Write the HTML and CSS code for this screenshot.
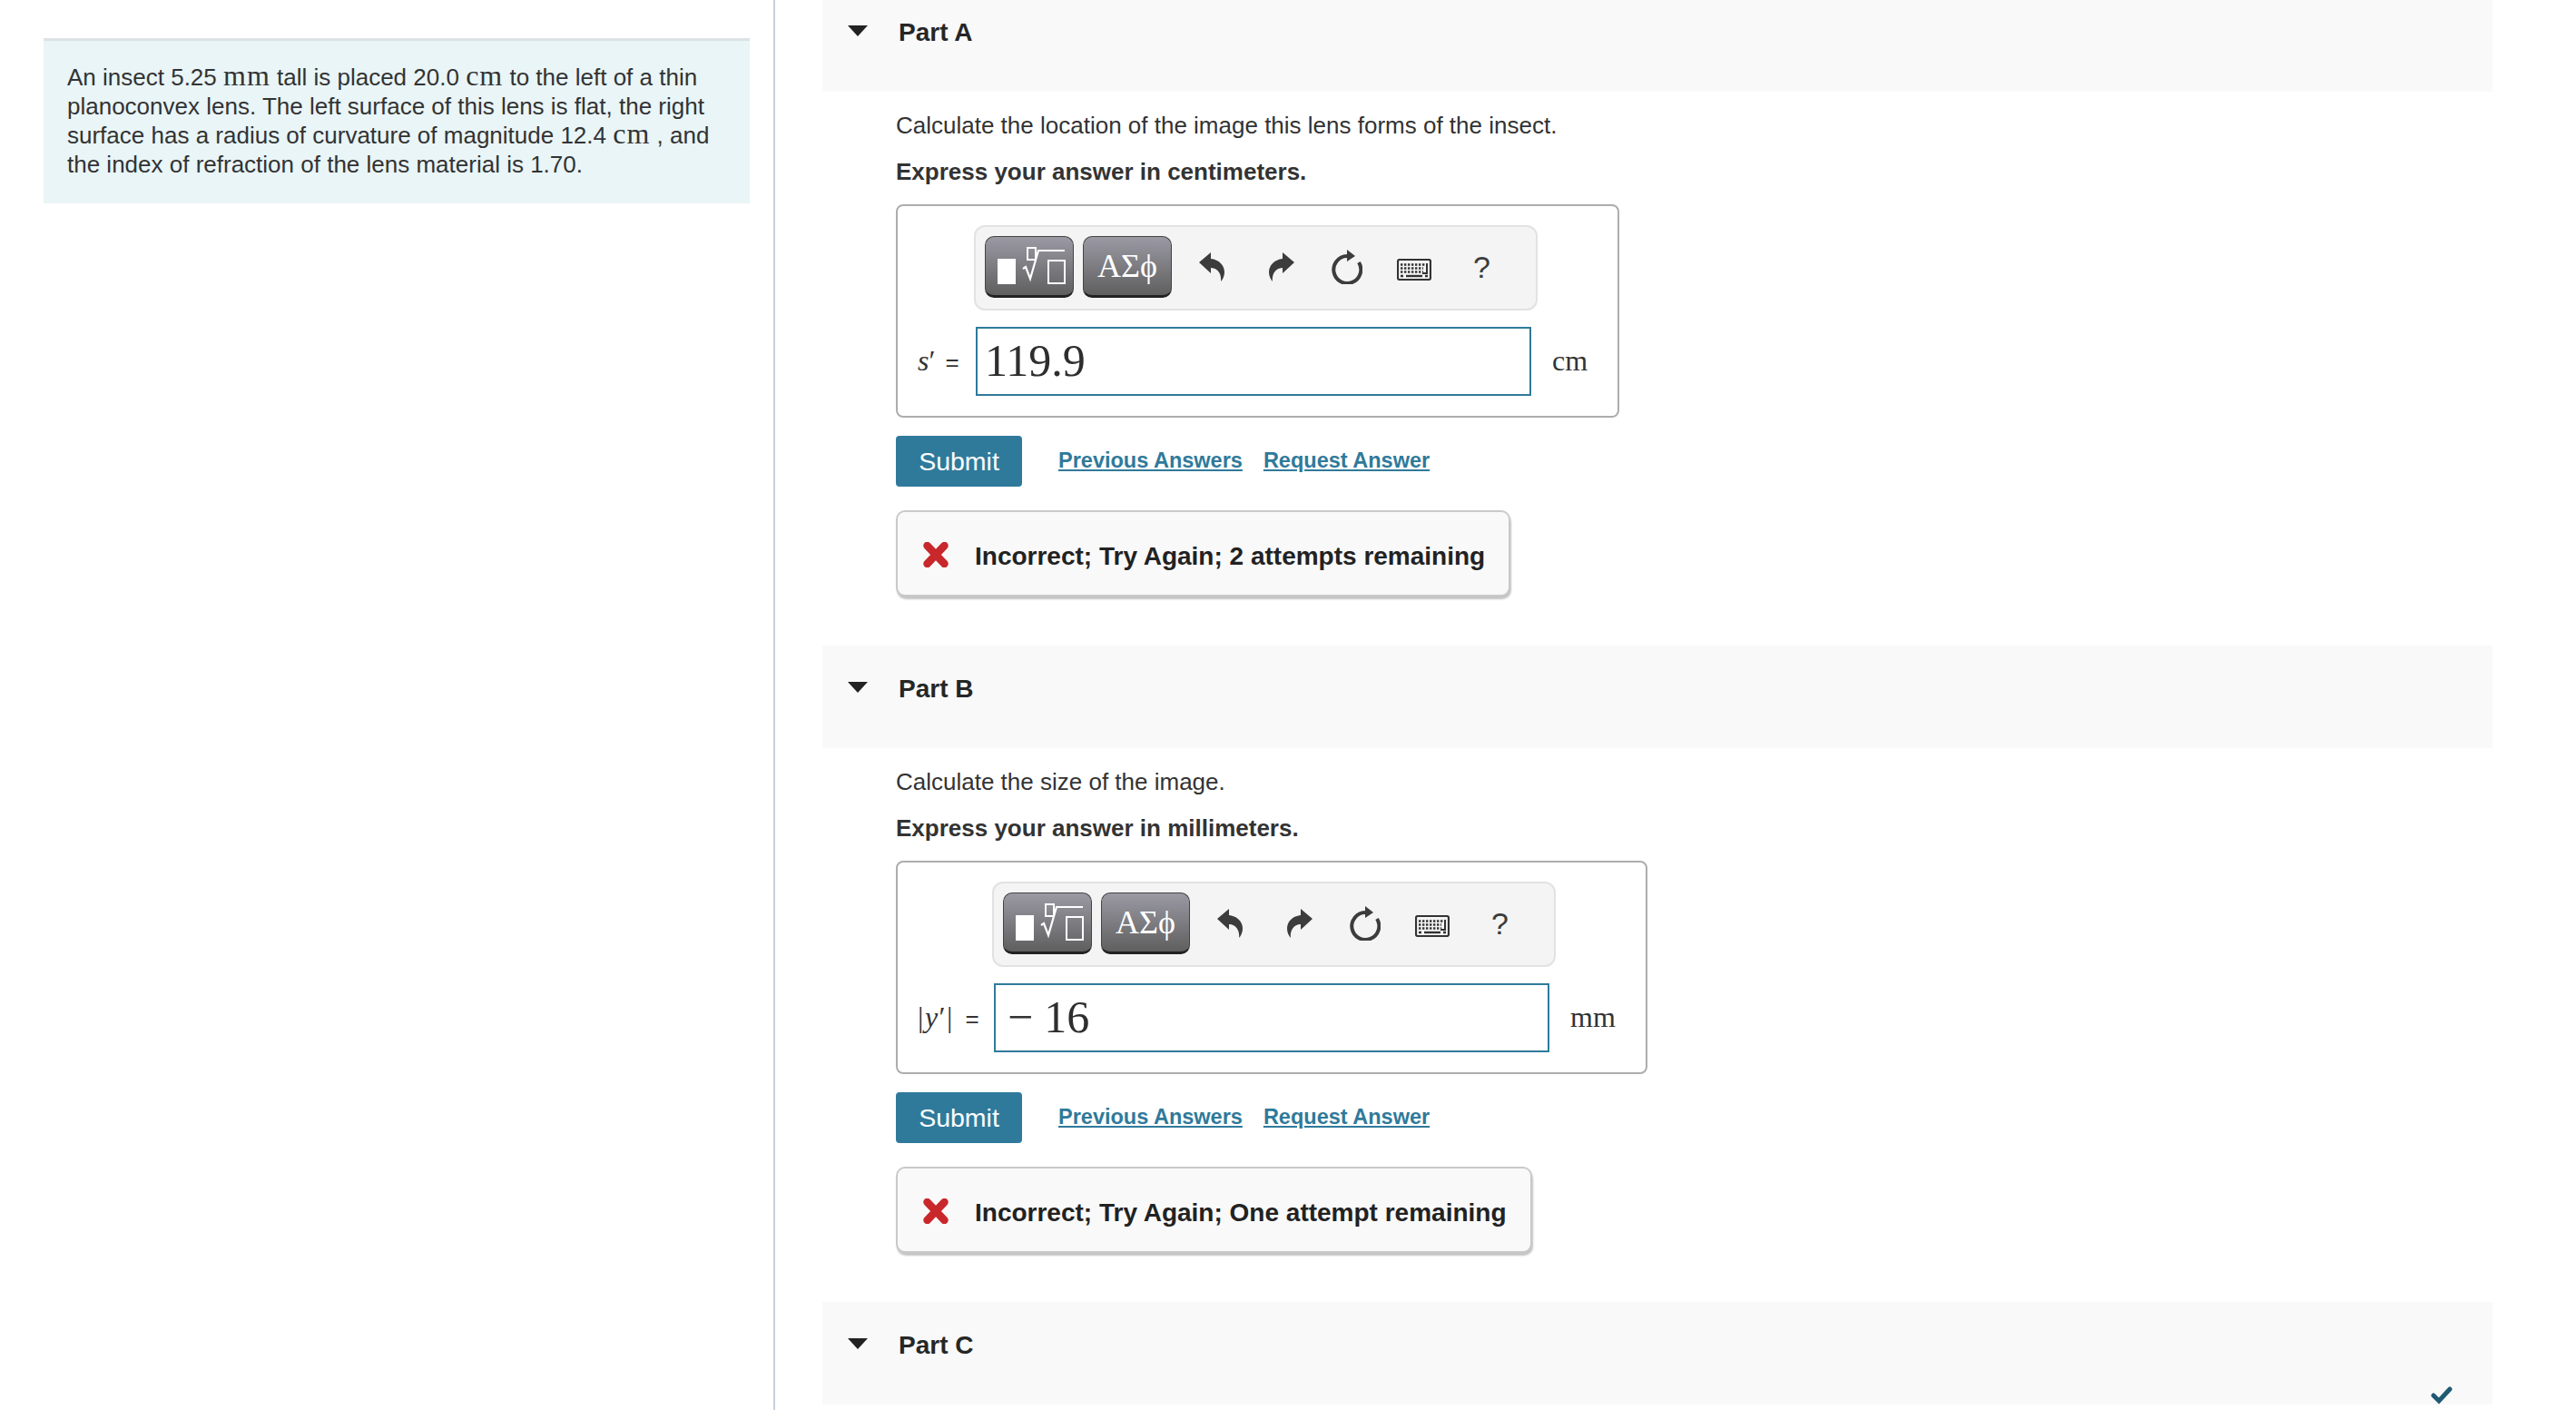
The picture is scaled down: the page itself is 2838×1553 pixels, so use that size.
FILE: index.html
```html
<!DOCTYPE html>
<html lang="en">
<head>
  <meta charset="UTF-8" />
  <title>Lens problem</title>
  <link rel="stylesheet" href="styles.css">
</head>
<body>

<svg class="sprites" xmlns="http://www.w3.org/2000/svg">
  <symbol id="i-undo" viewBox="0 0 28 32">
    <path d="M0 11 L13 0 V7 C22 8 28 14 28 22 C28 26 26 30 24 32 C25 26 22 17 13 17 V23 Z" fill="#3c3c3c"/>
  </symbol>
  <symbol id="i-redo" viewBox="0 0 28 32">
    <path d="M28 11 L15 0 V7 C6 8 0 14 0 22 C0 26 2 30 4 32 C3 26 6 17 15 17 V23 Z" fill="#3c3c3c"/>
  </symbol>
  <symbol id="i-reset" viewBox="0 0 34 38">
    <path d="M17 7 A15 15 0 1 0 30 14" fill="none" stroke="#3c3c3c" stroke-width="4"/>
    <path d="M17 0 L26 7 L17 13 Z" fill="#3c3c3c"/>
  </symbol>
  <symbol id="i-keys" viewBox="0 0 38 24">
    <rect x="1" y="1" width="36" height="22" rx="2" fill="#f4f4f4" stroke="#333" stroke-width="2.2"/>
    <path d="M4 6.5 H31 M4 10.5 H29 M4 14.5 H29" stroke="#333" stroke-width="2.4" stroke-dasharray="2.4 1.6" fill="none"/>
    <path d="M33 5 V16 H28" stroke="#333" stroke-width="2" fill="none"/>
    <path d="M10 19 H28" stroke="#333" stroke-width="2.4"/>
    <path d="M4 19 H7 M31 19 H34" stroke="#333" stroke-width="2.4"/>
  </symbol>
  <symbol id="i-templates" viewBox="0 0 76 42">
    <rect x="1" y="13" width="20" height="28" fill="#fff"/>
    <rect x="34" y="1" width="9" height="13" fill="none" stroke="#fff" stroke-width="2"/>
    <path d="M29 24 L32 22 L37 35 L46 4 H75" fill="none" stroke="#fff" stroke-width="2.2"/>
    <rect x="57" y="15" width="18" height="25" fill="none" stroke="#fff" stroke-width="2"/>
  </symbol>
  <symbol id="i-cross" viewBox="0 0 28 28">
    <path d="M4.5 4 L23.5 24 M23.5 4 L4.5 24" stroke="#c8282c" stroke-width="8.5" stroke-linecap="round"/>
  </symbol>
  <symbol id="i-check" viewBox="0 0 24 20">
    <path d="M3 10 L9 16 L21 3" fill="none" stroke="#1f5a72" stroke-width="5" stroke-linecap="round"/>
  </symbol>
</svg>

<div class="page">
  <!-- Problem statement -->
  <aside class="left-col">
    <div class="intro">
      An insect 5.25 <span class="unit">mm</span> tall is placed 20.0 <span class="unit">cm</span> to the left of a thin
      planoconvex lens. The left surface of this lens is flat, the right
      surface has a radius of curvature of magnitude 12.4 <span class="unit">cm</span> , and
      the index of refraction of the lens material is 1.70.
    </div>
  </aside>

  <main class="right-col">
    <!-- Part A -->
    <section class="part part-first">
      <div class="part-head">
        <span class="caret"></span>
        <h2>Part A</h2>
      </div>
      <div class="part-body">
        <p class="question">Calculate the location of the image this lens forms of the insect.</p>
        <p class="question strong">Express your answer in centimeters.</p>
        <div class="answer-box">
          <div class="toolbar">
            <span class="tool-btn"><svg class="ico-templates"><use href="#i-templates"/></svg></span>
            <span class="tool-btn greek">ΑΣϕ</span>
            <svg class="ico ico-undo"><use href="#i-undo"/></svg>
            <svg class="ico ico-redo"><use href="#i-redo"/></svg>
            <svg class="ico ico-reset"><use href="#i-reset"/></svg>
            <svg class="ico ico-keys"><use href="#i-keys"/></svg>
            <span class="help">?</span>
          </div>
          <div class="label label-a"><i>s</i>′ <span class="eq">=</span></div>
          <div class="answer-input">119.9</div>
          <div class="answer-unit">cm</div>
        </div>
        <div class="actions">
          <button class="submit">Submit</button>
          <a class="action-link first" href="#">Previous Answers</a>
          <a class="action-link" href="#">Request Answer</a>
        </div>
        <div class="feedback">
          <svg class="ico-cross"><use href="#i-cross"/></svg>
          <span>Incorrect; Try Again; 2 attempts remaining</span>
        </div>
      </div>
    </section>

    <!-- Part B -->
    <section class="part">
      <div class="part-head">
        <span class="caret"></span>
        <h2>Part B</h2>
      </div>
      <div class="part-body">
        <p class="question">Calculate the size of the image.</p>
        <p class="question strong">Express your answer in millimeters.</p>
        <div class="answer-box">
          <div class="toolbar">
            <span class="tool-btn"><svg class="ico-templates"><use href="#i-templates"/></svg></span>
            <span class="tool-btn greek">ΑΣϕ</span>
            <svg class="ico ico-undo"><use href="#i-undo"/></svg>
            <svg class="ico ico-redo"><use href="#i-redo"/></svg>
            <svg class="ico ico-reset"><use href="#i-reset"/></svg>
            <svg class="ico ico-keys"><use href="#i-keys"/></svg>
            <span class="help">?</span>
          </div>
          <div class="label label-b">|<i>y</i>′| <span class="eq">=</span></div>
          <div class="answer-input"><span class="minus">−</span>16</div>
          <div class="answer-unit">mm</div>
        </div>
        <div class="actions">
          <button class="submit">Submit</button>
          <a class="action-link first" href="#">Previous Answers</a>
          <a class="action-link" href="#">Request Answer</a>
        </div>
        <div class="feedback">
          <svg class="ico-cross"><use href="#i-cross"/></svg>
          <span>Incorrect; Try Again; One attempt remaining</span>
        </div>
      </div>
    </section>

    <!-- Part C -->
    <section class="part">
      <div class="part-head">
        <span class="caret"></span>
        <h2>Part C</h2>
        <svg class="ico-check"><use href="#i-check"/></svg>
      </div>
    </section>
  </main>
</div>

</body>
</html>
```

FILE: styles.css
```css
html, body {
  margin: 0;
  height: 1553px;
  overflow: hidden;
  background: #fff;
}

body {
  font-family: "Liberation Sans", Arial, sans-serif;
  font-size: 26px;
  line-height: 32px;
  color: #333;
}

.sprites {
  display: none;
}

.page {
  display: flex;
  height: 1553px;
}

.left-col {
  box-sizing: border-box;
  width: 854px;
  padding: 42px 26px 0 48px;
  border-right: 2px solid #c3d0e0;
  flex: none;
}

.intro {
  background: #e9f5f7;
  border-top: 3px solid #dde2e4;
  padding: 24px 20px 27px 26px;
}

.unit {
  font-family: "Liberation Serif", serif;
  font-size: 32px;
  line-height: 0;
  letter-spacing: 1px;
}

.right-col {
  width: 1840px;
  margin-left: 52px;
}

.part {
  margin-bottom: 54px;
}

.part-first {
  margin-top: -12px;
}

.part-head {
  box-sizing: border-box;
  display: flex;
  align-items: center;
  height: 113px;
  background: #f9f9f9;
  padding: 0 44px 18px 28px;
}

.part-head h2 {
  margin: 0 0 0 34px;
  font-size: 28px;
  font-weight: bold;
  color: #262626;
}

.caret {
  width: 0;
  height: 0;
  border-left: 11px solid transparent;
  border-right: 11px solid transparent;
  border-top: 12px solid #222;
  margin-top: -4px;
}

.ico-check {
  width: 24px;
  height: 20px;
  margin-left: auto;
  align-self: flex-end;
  margin-bottom: -18px;
}

.part-body {
  padding: 21px 0 0 81px;
}

.question {
  margin: 0 0 19px;
}

.strong {
  font-weight: bold;
  margin-bottom: 20px;
}

.answer-box {
  box-sizing: border-box;
  display: inline-grid;
  grid-template-columns: auto 612px auto;
  align-items: center;
  column-gap: 18px;
  row-gap: 18px;
  padding: 21px 33px 22px 22px;
  border: 2px solid #adadad;
  border-radius: 8px;
  vertical-align: top;
}

.toolbar {
  grid-column: 2 / 4;
  box-sizing: border-box;
  width: 621px;
  height: 94px;
  margin-left: -2px;
  display: flex;
  align-items: center;
  padding: 0 0 2px 10px;
  background: #f4f4f4;
  border: 2px solid #e2e2e2;
  border-radius: 12px;
}

.tool-btn {
  box-sizing: border-box;
  width: 98px;
  height: 68px;
  margin-right: 10px;
  display: flex;
  align-items: center;
  justify-content: center;
  background: linear-gradient(#9b9aa4, #5f5f5f);
  border: 1px solid #444;
  border-bottom: 3px solid #222;
  border-radius: 10px;
}

.greek {
  font-family: "Liberation Serif", serif;
  font-size: 36px;
  color: #fff;
}

.ico-templates {
  width: 76px;
  height: 42px;
  margin-left: 4px;
}

.ico {
  flex: none;
}

.ico-undo {
  width: 28px;
  height: 32px;
  margin-left: 20px;
}

.ico-redo {
  width: 28px;
  height: 32px;
  margin-left: 49px;
}

.ico-reset {
  width: 34px;
  height: 38px;
  margin-left: 41px;
}

.ico-keys {
  width: 38px;
  height: 24px;
  margin-left: 38px;
  margin-top: 6px;
}

.help {
  margin-left: 46px;
  font-size: 34px;
  color: #3c3c3c;
}

.label {
  font-family: "Liberation Serif", serif;
  font-size: 32px;
  white-space: nowrap;
}

.eq {
  font-family: "Liberation Sans", sans-serif;
  font-size: 26px;
  margin-left: 3px;
}

.label-a {
  width: 46px;
}

.label-b {
  width: 66px;
  letter-spacing: 1.5px;
}

.answer-input {
  box-sizing: border-box;
  height: 76px;
  border: 2px solid #2f7a9b;
  padding-left: 8px;
  font-family: "Liberation Serif", serif;
  font-size: 50px;
  line-height: 70px;
  color: #2e2e2e;
}

.minus {
  margin: 0 12px 0 5px;
}

.answer-unit {
  font-family: "Liberation Serif", serif;
  font-size: 32px;
  margin: -2px 0 0 5px;
}

.actions {
  display: flex;
  align-items: center;
  margin-top: 20px;
}

.submit {
  width: 139px;
  height: 56px;
  border: none;
  border-radius: 4px;
  background: #2f7a9b;
  color: #fff;
  font-family: "Liberation Sans", sans-serif;
  font-size: 28.5px;
}

.action-link {
  margin-left: 23px;
  font-size: 23.5px;
  font-weight: bold;
  color: #2f7a9b;
  text-decoration: underline;
  margin-top: -3px;
}

.action-link.first {
  margin-left: 40px;
}

.feedback {
  box-sizing: border-box;
  display: inline-flex;
  align-items: center;
  height: 95px;
  margin-top: 26px;
  padding: 7px 26px 0 28px;
  background: #f9f9f9;
  border: 2px solid #c9c9c9;
  border-radius: 10px;
  box-shadow: 1px 3px 2px #c4c4c4;
  font-size: 28px;
  font-weight: bold;
  color: #222;
}

.ico-cross {
  width: 28px;
  height: 28px;
  margin-right: 29px;
  margin-top: -4px;
}
```
